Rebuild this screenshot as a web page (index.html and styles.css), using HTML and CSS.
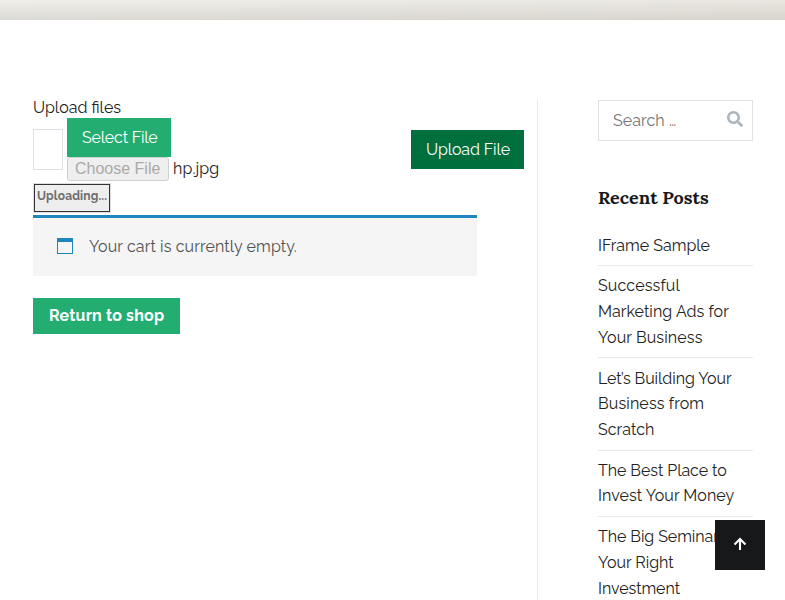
FILE: index.html
```html
<!DOCTYPE html>
<html lang="en">
<head>
<meta charset="utf-8">
<title>Cart</title>
<link rel="stylesheet" href="styles.css">
</head>
<body>
<header class="banner"></header>
<div class="page">
  <main class="content">
    <div class="upload-title">Upload files</div>
    <div class="upload-row">
      <div class="field"></div>
      <div class="picker">
        <div class="btn select">Select File</div>
        <div class="native"><span class="choose">Choose File</span><span>hp.jpg</span></div>
      </div>
      <div class="btn upload">Upload File</div>
    </div>
    <div class="progress">Uploading...</div>
    <div class="notice">
      <svg class="window" width="16" height="16" viewBox="0 0 16 16"><path fill="#1e85be" d="M0 0h16v16H0zM1 4v11h14V4z" fill-rule="evenodd"/></svg>
      <span>Your cart is currently empty.</span>
    </div>
    <a class="return">Return to shop</a>
  </main>
  <aside class="sidebar">
    <div class="search">
      <span>Search …</span>
      <svg width="16" height="16" viewBox="0 0 512 512"><path fill="#adb5bd" d="M505 442.700 405.300 343c-4.500-4.500-10.600-7-17-7H372c27.600-35.300 44-79.700 44-128C416 93.100 322.900 0 208 0S0 93.100 0 208s93.100 208 208 208c48.300 0 92.700-16.400 128-44v16.300c0 6.400 2.500 12.500 7 17l99.700 99.700c9.400 9.400 24.600 9.400 33.900 0l28.300-28.300c9.400-9.400 9.400-24.600.1-34zM208 336c-70.700 0-128-57.200-128-128 0-70.700 57.200-128 128-128 70.700 0 128 57.200 128 128 0 70.700-57.200 128-128 128z"/></svg>
    </div>
    <h2>Recent Posts</h2>
    <ul>
      <li>IFrame Sample</li>
      <li><span class="wide">Successful</span><br><span class="slight">Marketing Ads for</span><br><span class="wide">Your Business</span></li>
      <li><span class="tight">Let’s Building Your</span><br><span class="wide">Business from</span><br><span class="slight">Scratch</span></li>
      <li><span class="tight">The Best Place to</span><br><span class="slight">Invest Your Money</span></li>
      <li><span class="tight">The Big Seminar</span><br>Your Right<br><span class="tight">Investment</span></li>
    </ul>
  </aside>
</div>
<a class="to-top"><svg width="14" height="14" viewBox="0 0 14 14"><path d="M7 13V2M1.500 7.500 7 2 12.500 7.500" fill="none" stroke="#fff" stroke-width="2.100"/></svg></a>
</body>
</html>
```
FILE: styles.css
```css
* { box-sizing: border-box; }
html, body { height: 600px; overflow: hidden; }
body {
  margin: 0;
  background: #fff;
  color: #222;
  font: 16px/25.6px Raleway, Lato, sans-serif;
}
span { white-space: nowrap; }
.wide { letter-spacing: .13px; }
.slight { letter-spacing: .06px; }
.tight { letter-spacing: -.06px; }
.banner {
  height: 20px;
  background: linear-gradient(to bottom, rgba(200,198,190,0), rgba(190,188,180,.42)), linear-gradient(to right, #f1efea, #e9e7e0);
}
.page { display: flex; height: 500px; margin-top: 80px; padding-left: 33px; }
.content { width: 505px; border-right: 1px solid #e9e9e9; }
.upload-title { height: 18px; line-height: 15px; }
.upload-row { display: flex; align-items: flex-start; width: 491px; height: 66px; }
.field { width: 30px; height: 41px; margin: 11px 4px 0 0; border: 1px solid #dee2e6; }
.picker { width: 344px; }
.btn { height: 39px; line-height: 39px; padding-left: 15px; color: #fff; background: #24ad70; }
.select { width: 104px; letter-spacing: -.2px; }
.upload { width: 113px; margin-top: 12px; background: #006f3e; letter-spacing: -.1px; }
.native { display: flex; height: 24px; line-height: 23px; }
.choose {
  width: 102px;
  height: 24px;
  margin-right: 4px;
  padding-left: 7px;
  border: 1px solid #d0d0d0;
  border-radius: 3px;
  background: #efefef;
  color: #aaa;
  font: 16px/22px "Liberation Sans", sans-serif;
}
.choose + span { letter-spacing: .1px; }
.progress {
  width: 78px;
  height: 30px;
  margin-top: -1px;
  padding-left: 3px;
  border: 1px solid #ddd;
  outline: 1px solid #333;
  outline-offset: -2px;
  background: #eee;
  color: #6d6d6d;
  font-size: 12px;
  font-weight: 700;
  letter-spacing: .15px;
  line-height: 24px;
}
.notice {
  display: flex;
  align-items: center;
  width: 444px;
  height: 61px;
  margin-top: 2px;
  padding-left: 24px;
  border-top: 3px solid #1e85be;
  background: #f5f5f5;
  color: #515151;
  letter-spacing: .12px;
}
.window { margin: 0 16px 2px 0; }
.return {
  display: block;
  width: 147px;
  height: 36px;
  margin-top: 22px;
  padding-left: 16px;
  background: #24ad70;
  color: #fff;
  font-weight: 700;
  letter-spacing: .19px;
  line-height: 35px;
}
.sidebar { width: 155px; margin-left: 60px; }
.search {
  display: flex;
  justify-content: space-between;
  height: 41px;
  padding: 0 9px 0 14px;
  border: 1px solid #dee2e6;
  color: #757575;
  letter-spacing: .08px;
  line-height: 39px;
}
.search svg { margin-top: 10px; }
h2 { margin: 44px 0 21.6px; color: #16181a; font: 700 18px/26px Lora, "Liberation Serif", serif; }
ul { margin: 0; padding: 0; list-style: none; }
li { padding: 7.2px 0; border-bottom: 1px solid #e9e9e9; }
li:first-child { padding: 0 0 7.1px; }
.to-top {
  position: fixed;
  left: 715px;
  top: 520px;
  display: flex;
  justify-content: center;
  width: 50px;
  height: 50px;
  padding-top: 17px;
  background: #16181a;
}
```
